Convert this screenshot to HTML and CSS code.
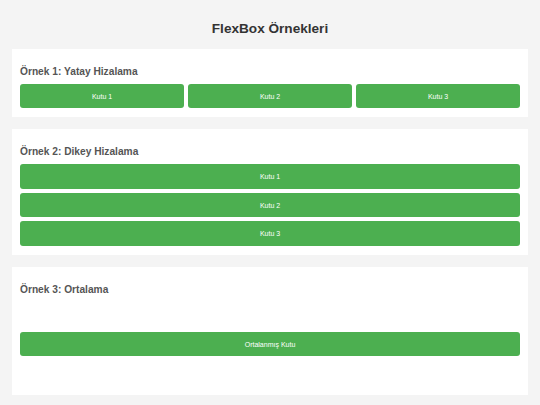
FILE: index.html
```html
<!DOCTYPE html>
<html lang="tr">

<head>
    <meta charset="UTF-8">
    <meta name="viewport" content="width=device-width, initial-scale=1.0">
    <title>FlexBox Örnekleri</title>
    <link rel="stylesheet" href="styles.css">
</head>

<body>

    <h1>FlexBox Örnekleri</h1>

    <!-- Örnek 1 -->
    <div class="section">
        <h2>Örnek 1: Yatay Hizalama</h2>
        <div class="row">
            <div class="box">Kutu 1</div>
            <div class="box">Kutu 2</div>
            <div class="box">Kutu 3</div>
        </div>
    </div>

    <!-- Örnek 2 -->
    <div class="section">
        <h2>Örnek 2: Dikey Hizalama</h2>
        <div class="column">
            <div class="box">Kutu 1</div>
            <div class="box">Kutu 2</div>
            <div class="box">Kutu 3</div>
        </div>
    </div>

    <!-- Örnek 3 -->
    <div class="section">
        <h2>Örnek 3: Ortalama</h2>
        <div class="center">
            <div class="box">Ortalanmış Kutu</div>
        </div>
    </div>

</body>

</html>
```

FILE: styles.css
```css
* {
    margin: 0;
    padding: 0;
    box-sizing: border-box;
}

body {
    font-family: "Liberation Sans", Arial, sans-serif;
    background-color: #f4f4f4;
    padding: 0 12px;
    color: #333;
}

h1 {
    text-align: center;
    font-size: 13.6px;
    line-height: 17px;
    margin: 20px 0 12px;
    color: #333;
}

.section {
    background-color: #fff;
    padding: 8px 8px 9px;
    margin-bottom: 12px;
}

h2 {
    font-size: 10.2px;
    line-height: 12px;
    color: #555;
    margin: 9px 0 6px;
}

.row {
    display: flex;
    gap: 4px;
}

.column {
    display: flex;
    flex-direction: column;
    gap: 4px;
}

.center {
    display: flex;
    align-items: center;
    height: 84px;
}

.box {
    flex: 1;
    height: 24px;
    display: flex;
    align-items: center;
    justify-content: center;
    background-color: #4caf50;
    color: #fff;
    font-size: 7px;
    border-radius: 3px;
}

.column .box {
    flex: none;
    height: 24.7px;
}
```
